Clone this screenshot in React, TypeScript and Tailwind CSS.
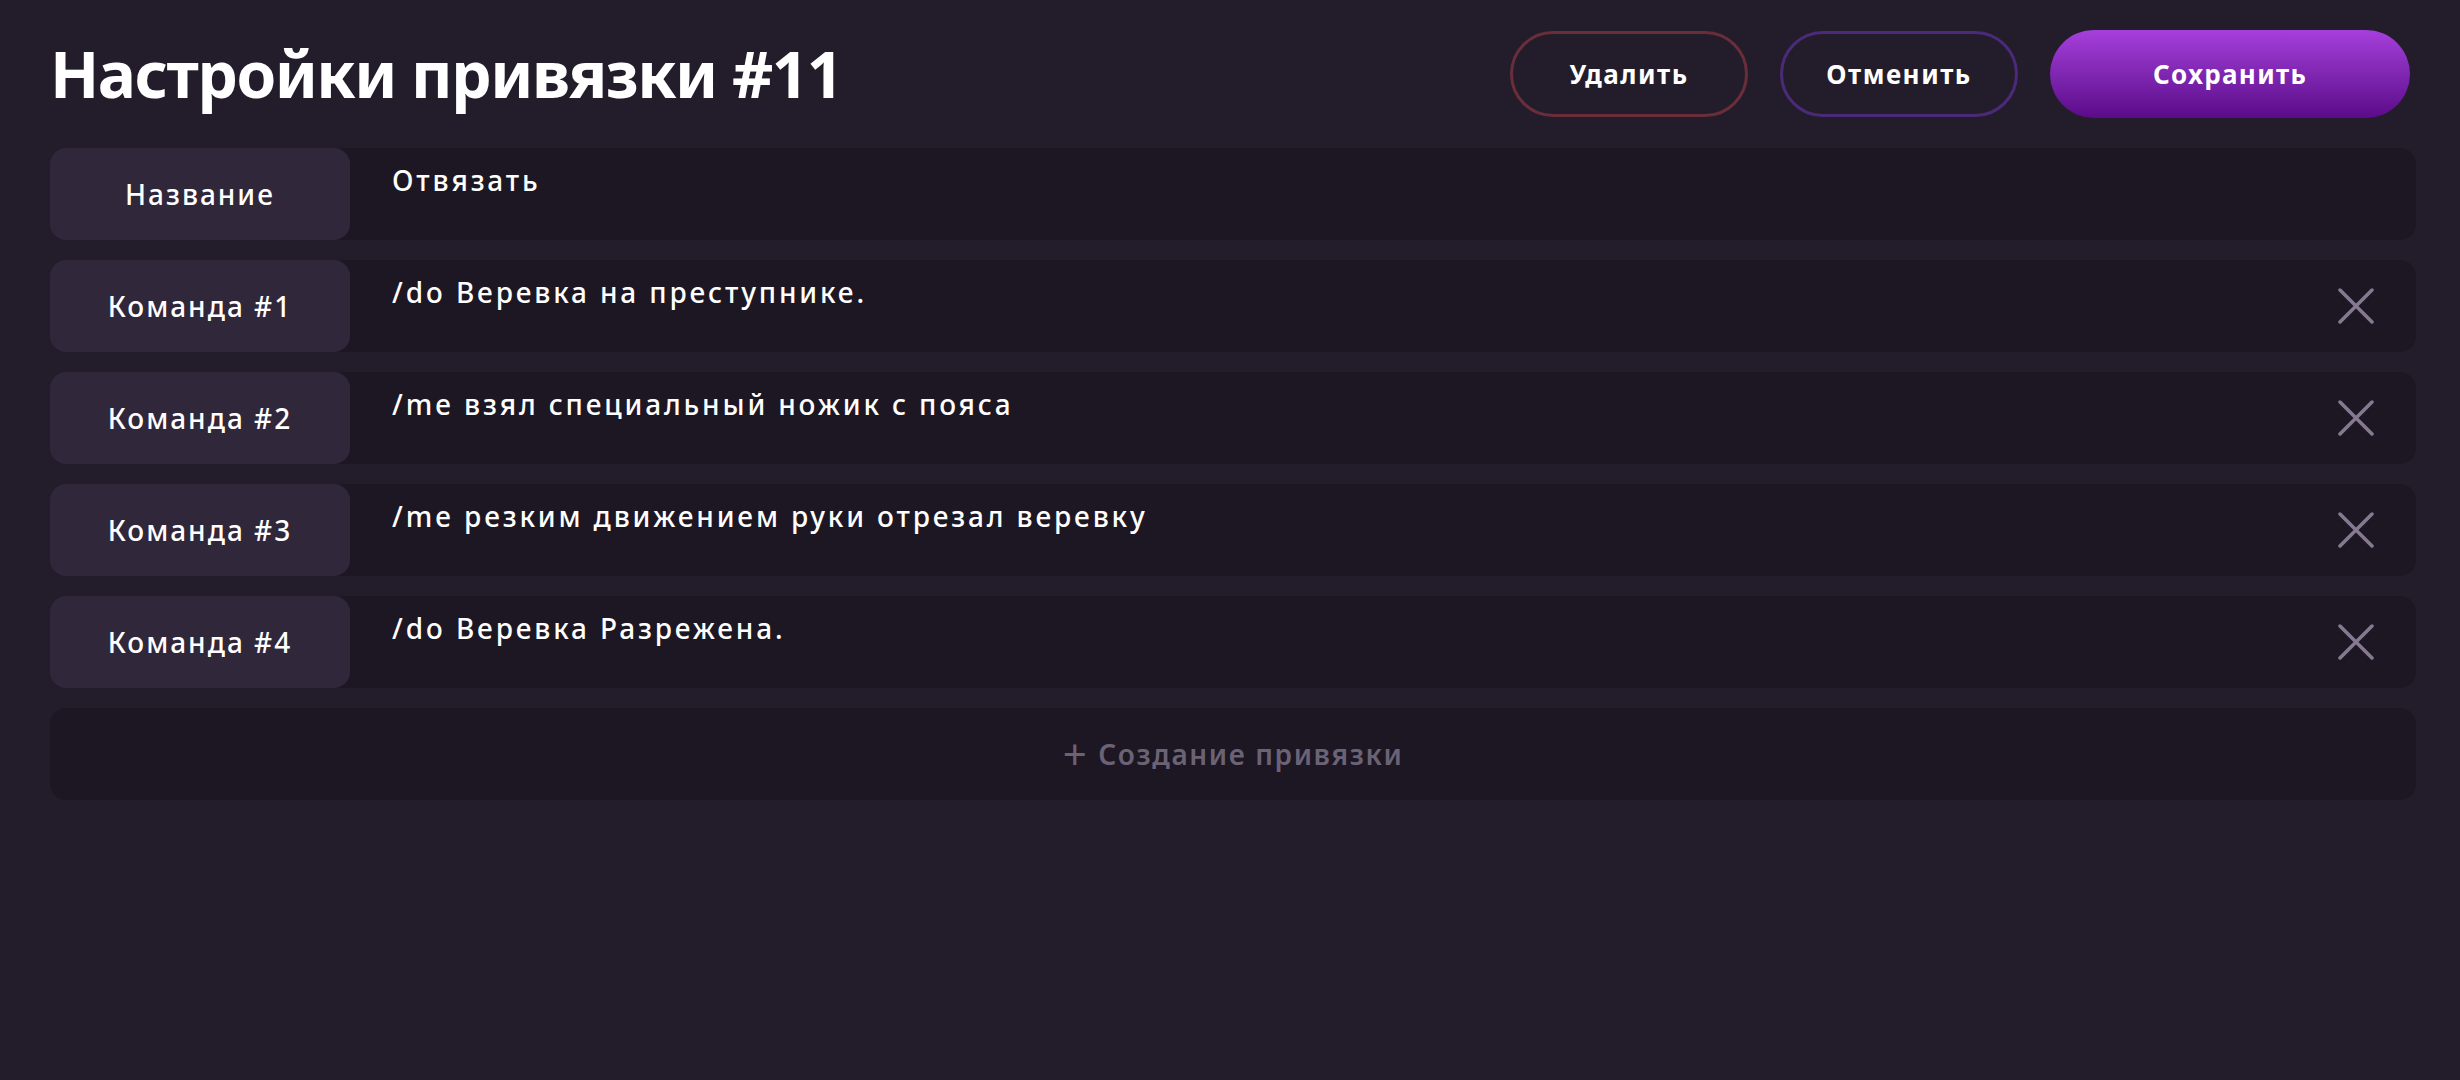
const commands = [
  { label: "Команда #1", text: "/do Веревка на преступнике." },
  { label: "Команда #2", text: "/me взял специальный ножик с пояса" },
  { label: "Команда #3", text: "/me резким движением руки отрезал веревку" },
  { label: "Команда #4", text: "/do Веревка Разрежена." },
];

function CloseIcon() {
  return (
    <svg width="36" height="36" viewBox="0 0 36 36" fill="none">
      <path d="M2 2L34 34M34 2L2 34" stroke="#857a91" strokeWidth="3.5" strokeLinecap="round" />
    </svg>
  );
}

function Row({ label, text, removable }: { label: string; text: string; removable?: boolean }) {
  return (
    <div className="flex h-[92px] rounded-2xl bg-[#1d1724]">
      <div className="flex w-[300px] shrink-0 items-center justify-center rounded-2xl bg-[#31273b] text-[28px] font-medium tracking-[2px] text-white">
        {label}
      </div>
      <div className="flex-1 pl-[42px] pt-[14px] text-[28px] font-medium leading-[36px] tracking-[2.85px] text-white">
        {text}
      </div>
      {removable && (
        <div className="flex items-center pr-[42px]">
          <CloseIcon />
        </div>
      )}
    </div>
  );
}

export default function App() {
  return (
    <div
      className="min-h-screen w-full bg-[#231d2b] px-[50px] pt-[30px] pr-[44px]"
      style={{ fontFamily: '"Noto Sans", sans-serif' }}
    >
      {/* Header */}
      <div className="flex h-[88px] items-center justify-between">
        <h1 className="text-[64px] font-bold leading-none tracking-[-1.5px] text-white">Настройки привязки #11</h1>
        <div className="flex items-center gap-[32px] pr-[6px]">
          <button className="h-[86px] w-[238px] rounded-full border-[3px] border-[#6a2d3a] text-[26px] font-bold tracking-[1.5px] text-white">
            Удалить
          </button>
          <button className="h-[86px] w-[238px] rounded-full border-[3px] border-[#4b2a7a] text-[26px] font-bold tracking-[1.5px] text-white">
            Отменить
          </button>
          <button className="h-[88px] w-[360px] rounded-full bg-gradient-to-b from-[#a63fdc] to-[#5b0a89] text-[26px] font-bold tracking-[1.3px] text-white">
            Сохранить
          </button>
        </div>
      </div>

      {/* Rows */}
      <div className="mt-[30px] flex flex-col gap-[20px]">
        <Row label="Название" text="Отвязать" />
        {commands.map((c) => (
          <Row key={c.label} label={c.label} text={c.text} removable />
        ))}
        <button className="flex h-[92px] items-center justify-center gap-[10px] rounded-2xl bg-[#1d1724] text-[28px] font-semibold tracking-[1.6px] text-[#6b6375]">
          <span className="text-[42px] font-normal leading-none">+</span>
          <span>Создание привязки</span>
        </button>
      </div>
    </div>
  );
}
